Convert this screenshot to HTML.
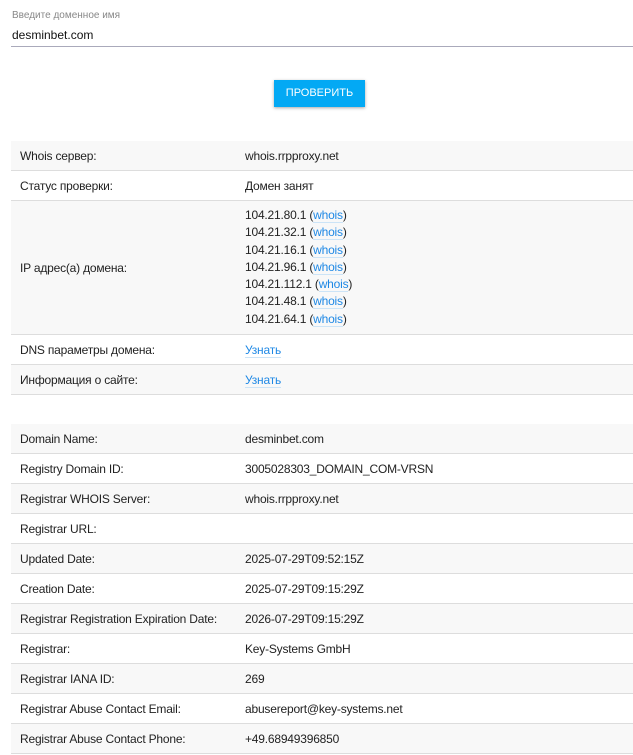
<!DOCTYPE html>
<html><head><meta charset="utf-8"><style>
body{margin:0;background:#fff;font-family:"Liberation Sans",sans-serif;color:#222;width:633px;height:755px;overflow:hidden;position:relative}
.lbl{position:absolute;left:12px;top:10px;font-size:10px;color:#888}
.val{position:absolute;left:12px;top:28px;font-size:12px;color:#111}
.line{position:absolute;left:11px;right:0;top:46px;height:1px;background:#aab}
.btn{position:absolute;left:274px;top:80px;width:91px;height:27px;background:#03a9f4;color:#fff;font-size:11px;text-align:center;line-height:27px;box-shadow:0 1px 3px rgba(0,0,0,.35)}
table{position:absolute;left:11px;width:622px;border-collapse:collapse;font-size:12px;letter-spacing:-0.2px}
td{height:29px;border-bottom:1px solid #ddd;padding:0 0 0 9px;vertical-align:middle}
td:first-child{width:216px}
tr:nth-child(odd) td{background:#f8f8f8}
a{color:#1e88e5;text-decoration:none;border-bottom:1px solid #cce4f7}
.ips{line-height:17.3px;padding-top:6px;padding-bottom:6px}
</style></head><body>
<div class="lbl">Введите доменное имя</div>
<div class="val">desminbet.com</div>
<div class="line"></div>
<div class="btn">ПРОВЕРИТЬ</div>
<table style="top:141px">
<tr><td>Whois сервер:</td><td>whois.rrpproxy.net</td></tr>
<tr><td>Статус проверки:</td><td>Домен занят</td></tr>
<tr><td>IP адрес(а) домена:</td><td class="ips">104.21.80.1 (<a>whois</a>)<br>104.21.32.1 (<a>whois</a>)<br>104.21.16.1 (<a>whois</a>)<br>104.21.96.1 (<a>whois</a>)<br>104.21.112.1 (<a>whois</a>)<br>104.21.48.1 (<a>whois</a>)<br>104.21.64.1 (<a>whois</a>)</td></tr>
<tr><td>DNS параметры домена:</td><td><a>Узнать</a></td></tr>
<tr><td>Информация о сайте:</td><td><a>Узнать</a></td></tr>
</table>
<table style="top:424px">
<tr><td>Domain Name:</td><td>desminbet.com</td></tr>
<tr><td>Registry Domain ID:</td><td>3005028303_DOMAIN_COM-VRSN</td></tr>
<tr><td>Registrar WHOIS Server:</td><td>whois.rrpproxy.net</td></tr>
<tr><td>Registrar URL:</td><td></td></tr>
<tr><td>Updated Date:</td><td>2025-07-29T09:52:15Z</td></tr>
<tr><td>Creation Date:</td><td>2025-07-29T09:15:29Z</td></tr>
<tr><td>Registrar Registration Expiration Date:</td><td>2026-07-29T09:15:29Z</td></tr>
<tr><td>Registrar:</td><td>Key-Systems GmbH</td></tr>
<tr><td>Registrar IANA ID:</td><td>269</td></tr>
<tr><td>Registrar Abuse Contact Email:</td><td>abusereport@key-systems.net</td></tr>
<tr><td>Registrar Abuse Contact Phone:</td><td>+49.68949396850</td></tr>
</table>
</body></html>
